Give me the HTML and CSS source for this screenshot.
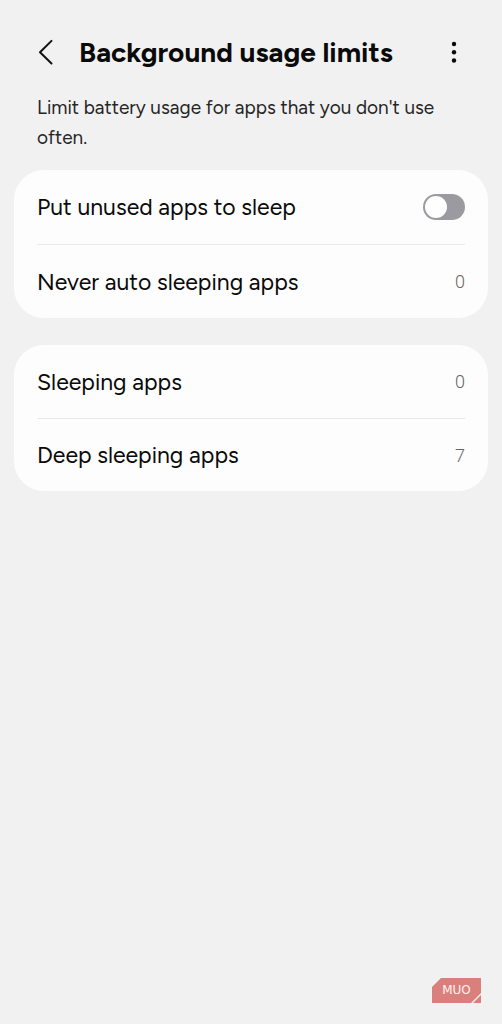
FILE: index.html
```
<!DOCTYPE html>
<html lang="en">
<head>
<meta charset="utf-8">
<meta name="viewport" content="width=device-width, initial-scale=1">
<title>Background usage limits</title>
<link rel="stylesheet" href="styles.css">
</head>
<body>
<header class="bar">
  <button class="icon-button" type="button" aria-label="Back">
    <svg width="18" height="26" viewBox="0 0 18 26" fill="none" stroke="#111" stroke-width="2" stroke-linecap="round" stroke-linejoin="round"><path d="M14.5 1.900 3 13.300l11.500 11.200"/></svg>
  </button>
  <h1 class="title">Background usage limits</h1>
  <button class="icon-button" type="button" aria-label="More options">
    <svg width="6" height="22" viewBox="0 0 6 22" fill="#0a0a0a"><circle cx="3" cy="3" r="2.200"/><circle cx="3" cy="11.300" r="2.200"/><circle cx="3" cy="19.500" r="2.200"/></svg>
  </button>
</header>
<main class="content">
  <p class="intro">Limit battery usage for apps that you don't use often.</p>
  <section class="card">
    <div class="row">
      <label class="label" for="sleep">Put unused apps to sleep</label>
      <input class="switch" id="sleep" type="checkbox" role="switch">
    </div>
    <a class="row" href="#never"><span class="label">Never auto sleeping apps</span><span class="count">0</span></a>
  </section>
  <section class="card">
    <a class="row" href="#sleeping"><span class="label">Sleeping apps</span><span class="count">0</span></a>
    <a class="row" href="#deep"><span class="label">Deep sleeping apps</span><span class="count">7</span></a>
  </section>
</main>
<footer class="footer">
  <div class="mark">
    <svg class="mark-shape" viewBox="0 0 49 25" width="49" height="25"><path fill="#da807c" d="M9 0H49V15L39 25H0V9Z"/><path fill="#da807c" d="M49 17V25H41Z"/></svg>
    <span class="mark-text">MUO</span>
  </div>
</footer>
</body>
</html>
```
FILE: styles.css
```
* {
  box-sizing: border-box;
}

body {
  margin: 0;
  min-height: 100vh;
  display: flex;
  flex-direction: column;
  background: #f1f1f1;
  color: #0a0a0a;
  font-family: Figtree, Inter, "Liberation Sans", sans-serif;
}

.bar {
  display: flex;
  align-items: center;
  padding: 32px 32px 0 30px;
}

.icon-button {
  display: flex;
  align-items: center;
  justify-content: center;
  width: 32px;
  height: 40px;
  padding: 0;
  border: 0;
  background: none;
}

.title {
  flex: 1;
  margin: 0 0 0 17px;
  font-size: 28px;
  line-height: 40px;
  font-weight: 700;
  white-space: nowrap;
}

.content {
  flex: 1;
  padding: 0 14px;
}

.intro {
  margin: 21px 23px 17px;
  color: #252525;
  font-size: 19px;
  line-height: 30px;
}

.card {
  margin-bottom: 27px;
  padding: 0 23px;
  border-radius: 30px;
  background: #fdfdfd;
}

.row {
  display: flex;
  align-items: center;
  justify-content: space-between;
  min-height: 74px;
  color: inherit;
  text-decoration: none;
}

.row + .row {
  border-top: 1px solid #e9e9e9;
}

.card + .card .row {
  min-height: 73px;
}

.label {
  font-size: 23px;
  line-height: 30px;
}

.count {
  color: #666;
  font-family: Roboto, "Liberation Sans", sans-serif;
  font-size: 18px;
  font-weight: 300;
}

.switch {
  appearance: none;
  display: flex;
  width: 42px;
  height: 26px;
  margin: 0;
  padding: 2px;
  border-radius: 13px;
  background: #9b9aa0;
}

.switch::before {
  content: "";
  width: 22px;
  height: 22px;
  border-radius: 50%;
  background: #fefefe;
}

.switch:checked {
  justify-content: flex-end;
  background: #387aff;
}

.footer {
  display: flex;
  justify-content: flex-end;
  padding: 0 21px 21px;
}

.mark {
  display: grid;
  place-items: center;
}

.mark-shape,
.mark-text {
  grid-area: 1 / 1;
}

.mark-text {
  color: #fff3f0;
  font-family: "DejaVu Sans", sans-serif;
  font-size: 12px;
  line-height: 25px;
}
```
